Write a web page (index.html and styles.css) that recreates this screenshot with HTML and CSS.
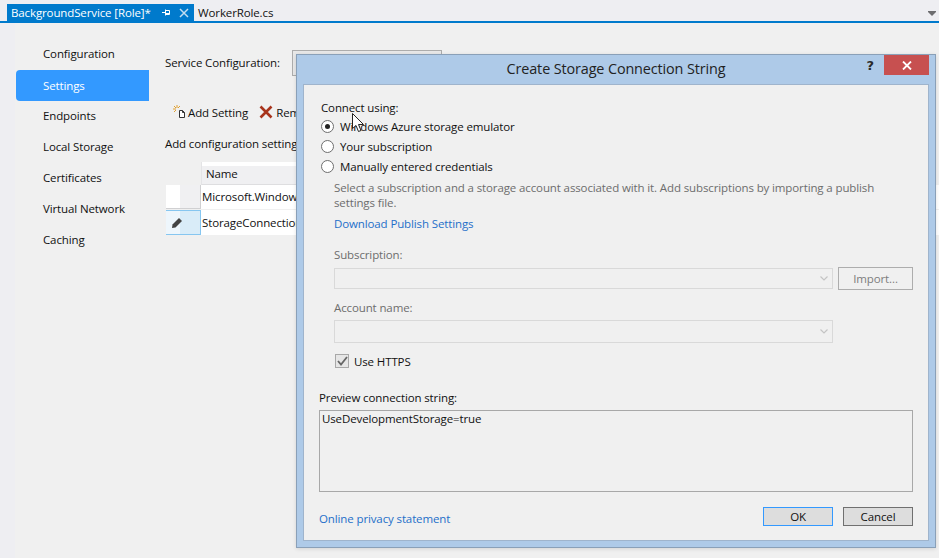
FILE: index.html
```html
<!DOCTYPE html>
<html lang="en">
<head>
<meta charset="utf-8">
<title>Create Storage Connection String</title>
<link rel="stylesheet" href="styles.css">
</head>
<body>
<div class="ide">
  <header class="tabstrip">
    <div class="tab-active">
      <span class="tab-title">BackgroundService [Role]*</span>
      <svg class="pin" width="9" height="9" viewBox="0 0 9 9"><path d="M0 4.500h3M3.500 1.500v6M3.500 2.500h4v4h-4M3.500 5.500h4" fill="none" stroke="#fff" stroke-width="1"/></svg>
      <svg class="tab-x" width="10" height="10" viewBox="0 0 10 10"><path d="M1 1l8 8M9 1l-8 8" stroke="#c4def0" stroke-width="1.500"/></svg>
    </div>
    <div class="tab-other">WorkerRole.cs</div>
    <svg class="tab-menu" width="8" height="5" viewBox="0 0 8 5"><path d="M0 0h8v1H0zM0 1h8L4 5z" fill="#6d6d70"/></svg>
  </header>
  <div class="page">
    <nav class="sidebar">
      <div class="nav-item">Configuration</div>
      <div class="nav-item is-current">Settings</div>
      <div class="nav-item">Endpoints</div>
      <div class="nav-item">Local Storage</div>
      <div class="nav-item">Certificates</div>
      <div class="nav-item">Virtual Network</div>
      <div class="nav-item">Caching</div>
    </nav>
    <main class="content">
      <div class="config-row"><span class="config-label">Service Configuration:</span><span class="config-select"></span></div>
      <div class="toolbar">
        <span class="tool">
          <svg width="15" height="15" viewBox="0 0 15 15"><path d="M7.500 5.500h3l2 2v5h-5z" fill="#fff" stroke="#333"/><path d="M10.500 5.500v2h2" fill="none" stroke="#333"/><path d="M5 0v3M1 4h3M2 1l2 2M8 1L6 3M2 7l2-2" stroke="#e0a030"/></svg>
          Add Setting</span>
        <span class="tool tool-remove">
          <svg width="14" height="14" viewBox="0 0 14 14"><path d="M1.500 1.500l11 11M12.500 1.500l-11 11" stroke="#a8341c" stroke-width="2.600"/></svg>
          Remove Setting</span>
      </div>
      <p class="hint">Add configuration settings that can be accessed programmatically</p>
      <div class="grid">
        <div class="grid-head"><span class="corner"></span><span class="col-name">Name</span></div>
        <div class="grid-row"><span class="row-head"></span><span class="cell">Microsoft.WindowsAzure.Plugins.Diagnostics</span></div>
        <div class="grid-row is-selected"><span class="row-head">
          <svg width="12" height="12" viewBox="0 0 12 12"><path d="M8 1l3 3-6.500 6.500L1 11l.5-3.500z" fill="#444"/></svg>
        </span><span class="cell">StorageConnectionString</span></div>
      </div>
    </main>
  </div>

  <section class="dialog">
    <div class="titlebar">
      <h1 class="dialog-title">Create Storage Connection String</h1>
      <span class="help">?</span>
      <span class="close"><svg width="10" height="9" viewBox="0 0 10 9"><path d="M1 .5l8 8M9 .5l-8 8" stroke="#fff" stroke-width="1.800"/></svg></span>
    </div>
    <div class="dialog-body">
      <div class="connect-label">Connect using:</div>
      <label class="radio-row"><span class="radio is-on"></span>Windows Azure storage emulator</label>
      <label class="radio-row"><span class="radio"></span>Your subscription</label>
      <label class="radio-row"><span class="radio"></span>Manually entered credentials</label>
      <div class="creds">
        <p class="creds-note">Select a subscription and a storage account associated with it. Add subscriptions by importing a publish settings file.</p>
        <a class="link download">Download Publish Settings</a>
        <div class="field-label first">Subscription:</div>
        <div class="combo-row">
          <div class="combo"><svg width="8" height="5" viewBox="0 0 8 5"><path d="M.5.500L4 4 7.500.5" fill="none" stroke="#c4c4c4" stroke-width="1.200"/></svg></div>
          <div class="import">Import...</div>
        </div>
        <div class="field-label second">Account name:</div>
        <div class="combo tall"><svg width="8" height="5" viewBox="0 0 8 5"><path d="M.5.500L4 4 7.500.5" fill="none" stroke="#c4c4c4" stroke-width="1.200"/></svg></div>
        <label class="check-row"><span class="check"><svg width="11" height="10" viewBox="0 0 11 10"><path d="M1 5l3 3.500L10 1" fill="none" stroke="#666" stroke-width="1.800"/></svg></span>Use HTTPS</label>
      </div>
      <div class="preview-label">Preview connection string:</div>
      <div class="preview">UseDevelopmentStorage=true</div>
      <div class="footer">
        <a class="link privacy">Online privacy statement</a>
        <div class="buttons">
          <div class="btn is-default">OK</div>
          <div class="btn">Cancel</div>
        </div>
      </div>
    </div>
  </section>

  <svg class="cursor" width="13" height="20" viewBox="0 0 13 20"><path d="M.5.500v15l3.500-3 2.500 6 2.500-1-2.500-6h5z" fill="#fff" stroke="#222" stroke-width="1"/></svg>
</div>
</body>
</html>
```
FILE: styles.css
```css
* { box-sizing: border-box; }
html, body { margin: 0; height: 100%; }
body {
  font-family: "Open Sans", "Noto Sans", sans-serif;
  font-size: 11.5px;
  letter-spacing: -0.12px;
  color: #111;
  background: #eeeef2;
  overflow: hidden;
}
.ide { position: relative; width: 939px; height: 558px; overflow: hidden; }

.tabstrip {
  display: flex; align-items: stretch;
  height: 23px; padding: 4px 0 0 7px;
  border-bottom: 2px solid #007acc;
}
.tab-active {
  display: flex; align-items: center;
  width: 187px; padding-left: 4px;
  background: #007acc; color: #fff;
}
.tab-title { width: 150px; white-space: nowrap; }
.pin { margin-left: 1px; }
.tab-x { margin-left: 8px; }
.tab-other { display: flex; align-items: center; padding-left: 4px; }
.tab-menu { margin: 7px 3px 0 auto; align-self: flex-start; }

.page {
  display: flex; height: 535px; margin-left: 15px; padding-top: 10px;
  background: #f0f0f0;
}
.sidebar { width: 134px; padding: 6px 0 0 1px; }
.nav-item { display: flex; align-items: center; height: 31px; padding: 0 0 2px 27px; }
.nav-item.is-current { padding-bottom: 0; background: #3399ff; color: #fff; border-radius: 4px 0 0 4px; }
.content { flex: 1; padding-left: 16px; }
.config-row { display: flex; align-items: center; height: 26px; margin-top: 17px; }
.config-label { width: 127px; padding-bottom: 2px; }
.config-select { width: 150px; height: 26px; border: 1px solid #acacac; background: #e8e8e8; }
.toolbar { display: flex; align-items: center; gap: 9px; height: 20px; margin-top: 26px; padding-left: 7px; }
.tool { display: flex; align-items: center; gap: 1px; white-space: nowrap; }
.tool-remove { margin-left: 2px; gap: 3px; }
.hint { margin: 14px 0 0; line-height: 16px; white-space: nowrap; }
.grid { margin-top: 10px; margin-left: 1px; }
.grid-head { display: flex; height: 23px; }
.corner { width: 35px; }
.col-name {
  width: 400px; padding: 4px 0 0 4px;
  background: linear-gradient(#fff 0 4px, #f0f0f2 4px);
  border-bottom: 1px solid #dedee0; border-left: 1px solid #e4e4e6;
}
.grid-row { display: flex; align-items: center; height: 24px; background: #fff; }
.grid-row + .grid-row { height: 25px; margin-top: 1px; }
.row-head {
  display: flex; align-items: center;
  width: 35px; height: 100%; padding-left: 5px;
  background: linear-gradient(90deg, #fff 0 14px, #f0f0f2 14px);
  border-right: 1px solid #d0d0d2; border-bottom: 1px solid #d0d0d2;
}
.is-selected .row-head {
  background: linear-gradient(90deg, #eef6fc 0 14px, #d9ecf8 14px);
  border: 1px solid #86c6f0; border-left: 0;
}
.cell { padding: 0 0 1px 1px; white-space: nowrap; }

.dialog {
  position: absolute; left: 296px; top: 54px;
  width: 640px; height: 494px;
  display: flex; flex-direction: column;
  background: #aecae8;
  border: 1px solid #8aa0b8;
  box-shadow: 0 1px 4px rgba(0,0,0,.12);
}
.titlebar { position: relative; height: 29px; flex: none; }
.dialog-title {
  margin: 0; padding: 4px 0 0;
  font-size: 14.400px; font-weight: 400; line-height: 20px;
  text-align: center; color: #222;
}
.help {
  position: absolute; right: 61px; top: 2px;
  font: 700 13px/17px "DejaVu Sans", sans-serif; color: #2a2a2a; letter-spacing: 0;
}
.close {
  position: absolute; right: 6px; top: 0;
  display: flex; align-items: center; justify-content: center;
  width: 45px; height: 20px; background: #c75050;
}
.dialog-body {
  flex: 1; margin: 0 6px 6px; padding: 10px 15px 0;
  background: #f0f0f0;
  border: 1px solid #9fb4cc;
}
.connect-label { line-height: 16px; margin: 5px 0 0 2px; }
.radio-row { display: flex; align-items: center; gap: 6px; height: 20px; margin-left: 2px; }
.radio { width: 13px; height: 13px; border: 1px solid #6e6e6e; border-radius: 50%; background: #fff; position: relative; }
.radio.is-on::after {
  content: ""; position: absolute; left: 3px; top: 3px;
  width: 5px; height: 5px; border-radius: 50%; background: #222;
}
.creds { margin-left: 15px; }
.creds-note { margin: 4px 0 0; line-height: 15px; color: #6d6d6d; width: 570px; }
.link { color: #1e6fc9; }
.download { display: block; line-height: 16px; margin-top: 6px; }
.field-label { color: #6d6d6d; line-height: 16px; }
.field-label.first { margin-top: 15px; }
.field-label.second { margin-top: 10px; }
.combo-row { display: flex; align-items: center; gap: 5px; margin-top: 4px; height: 23px; }
.combo {
  display: flex; align-items: center; justify-content: flex-end;
  width: 499px; height: 21px; padding-right: 4px;
  border: 1px solid #d9d9d9; background: #f0f0f0;
}
.combo.tall { height: 23px; margin-top: 4px; }
.import {
  display: flex; align-items: center; justify-content: center;
  width: 75px; height: 23px;
  border: 1px solid #adadad; color: #7d7d7d;
}
.check-row { display: flex; align-items: center; gap: 5px; height: 20px; margin: 8px 0 0 1px; }
.check {
  display: flex; align-items: center; justify-content: center;
  width: 14px; height: 14px; border: 1px solid #a8a8a8; background: #e6e6e6;
}
.preview-label { line-height: 16px; margin-top: 19px; }
.preview {
  width: 594px; height: 82px; margin-top: 4px; padding: 0 2px;
  line-height: 16px; border: 1px solid #a8a8a8;
}
.footer { display: flex; align-items: flex-start; justify-content: space-between; margin-top: 15px; height: 20px; width: 594px; }
.privacy { margin-top: 4px; line-height: 16px; }
.buttons { display: flex; gap: 10px; }
.btn {
  display: flex; align-items: center; justify-content: center;
  width: 70px; height: 19px;
  background: #dddddd; border: 1px solid #707070;
}
.btn.is-default { border-color: #3399ff; }

.cursor { position: absolute; left: 352px; top: 113px; }
```
